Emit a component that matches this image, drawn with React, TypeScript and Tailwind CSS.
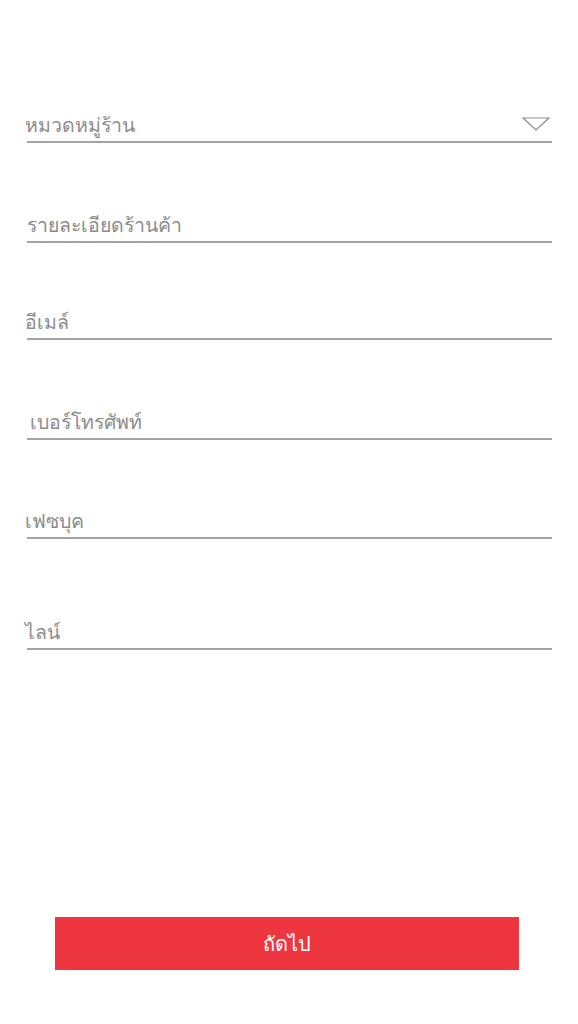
import React from "react";

type Field = {
  label: string;
  gap: string;
  indent: string;
  dropdown?: boolean;
};

const fields: Field[] = [
  { label: "หมวดหมู่ร้าน", gap: "mt-[113px]", indent: "-ml-[2px]", dropdown: true },
  { label: "รายละเอียดร้านค้า", gap: "mt-[70px]", indent: "ml-0" },
  { label: "อีเมล์", gap: "mt-[67px]", indent: "-ml-[2px]" },
  { label: "เบอร์โทรศัพท์", gap: "mt-[70px]", indent: "ml-[3px]" },
  { label: "เฟซบุค", gap: "mt-[69px]", indent: "-ml-[2px]" },
  { label: "ไลน์", gap: "mt-[81px]", indent: "-ml-[2px]" },
];

function FormField({ label, gap, indent, dropdown }: Field) {
  return (
    <div className={`${gap} flex items-center justify-between border-b-2 border-[#a3a3a3]`}>
      <span className={`${indent} -mt-[2px] mb-[2px] text-[19.5px] leading-[28px] font-light text-[#8c8c8c]`}>
        {label}
      </span>
      {dropdown && (
        <svg width="28" height="14" viewBox="0 0 28 14" className="mr-[2px] mb-[6px]">
          <path d="M1 1 L27 1 L14 13 Z" fill="none" stroke="#8c8c8c" strokeWidth="1.2" />
        </svg>
      )}
    </div>
  );
}

export default function App() {
  return (
    <div
      className="flex h-[1024px] w-full flex-col bg-white"
      style={{ fontFamily: '"Noto Sans", "Liberation Sans", sans-serif' }}
    >
      <div className="flex flex-col pl-[27px] pr-[26px]">
        {fields.map((f) => (
          <FormField key={f.label} {...f} />
        ))}
      </div>
      <div className="mt-auto mb-[54px] flex justify-center">
        <button className="ml-[-4px] h-[53px] w-[464px] bg-[#ee3640] text-[20px] text-white">
          ถัดไป
        </button>
      </div>
    </div>
  );
}
